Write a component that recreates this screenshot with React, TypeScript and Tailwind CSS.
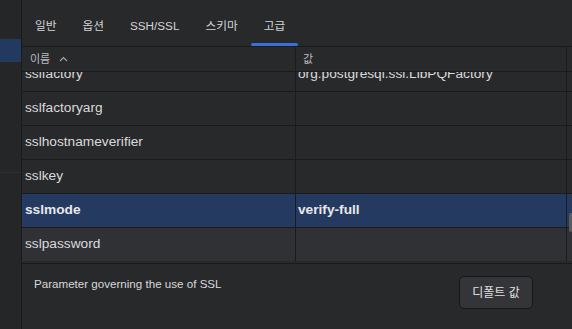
import React from "react";

const rows = [
  { name: "sslfactory", value: "org.postgresql.ssl.LibPQFactory" },
  { name: "sslfactoryarg", value: "" },
  { name: "sslhostnameverifier", value: "" },
  { name: "sslkey", value: "" },
  { name: "sslmode", value: "verify-full", selected: true },
  { name: "sslpassword", value: "", alt: true },
];

const tabs = ["일반", "옵션", "SSH/SSL", "스키마", "고급"];

function Tabs() {
  return (
    <div className="flex h-[47px] border-b border-[#1b1b1d]">
      {tabs.map((t) => (
        <div
          key={t}
          className="relative flex items-center px-[13px] pt-[6px] text-[11.7px] text-[#d4d4d6]"
        >
          {t}
          {t === "고급" && (
            <div className="absolute bottom-0 left-0 right-0 h-[3px] rounded-full bg-[#3a6fd6]" />
          )}
        </div>
      ))}
    </div>
  );
}

function Header() {
  return (
    <div className="flex h-[25px] border-b border-[#1b1b1d] text-[11px] text-[#bdbdc0]">
      <div className="flex w-[274px] items-center gap-[9px] border-r border-[#1b1b1d] pl-[8px]">
        <span>이름</span>
        <svg width="9" height="6" viewBox="0 0 9 6" fill="none">
          <polyline points="1,5 4.5,1.5 8,5" stroke="#a8a8ab" strokeWidth="1.1" />
        </svg>
      </div>
      <div className="flex w-[271px] items-center border-r border-[#1b1b1d] pl-[7px]">값</div>
    </div>
  );
}

function Row({ r }: { r: (typeof rows)[number] }) {
  const bg = r.selected ? "bg-[#253a60]" : r.alt ? "bg-[#303134]" : "";
  const weight = r.selected ? "font-bold text-[#e8e8ea]" : "text-[#dadadc]";
  return (
    <div className={`flex h-[34px] border-b border-[#1b1b1d] text-[13.7px] ${bg} ${weight}`}>
      <div className="flex w-[274px] items-center border-r border-[#1b1b1d] pl-[3px]">{r.name}</div>
      <div className="flex w-[271px] items-center border-r border-[#1b1b1d] pl-[2px]">{r.value}</div>
    </div>
  );
}

export default function App() {
  return (
    <div
      className="relative flex h-[329px] w-[572px] overflow-hidden bg-[#28292b]"
      style={{ fontFamily: '"Liberation Sans", "Noto Sans CJK KR", sans-serif' }}
    >
      <div className="flex w-[22px] flex-col border-r border-[#1b1b1d] bg-[#252628]">
        <div className="mt-[39px] h-[23px] bg-[#233a60]" />
        <div className="mt-[110px] h-px bg-[#303033]" />
      </div>
      <div className="flex flex-1 flex-col">
        <Tabs />
        <Header />
        {/* list is scrolled a little, first row sits partly under the header */}
        <div className="h-[189px] overflow-hidden">
          <div className="mt-[-14px]">
            {rows.map((r) => (
              <Row key={r.name} r={r} />
            ))}
          </div>
        </div>
        <div className="h-[3px] border-b border-[#1b1b1d]" />
        <div className="flex flex-1 items-start justify-between pl-[12px] pr-[39px] pt-[12px]">
          <div className="text-[11.6px] leading-[16px] text-[#d8d8da]">
            Parameter governing the use of SSL
          </div>
          <button className="h-[33px] w-[74px] rounded-[5px] border border-[#161618] bg-[#343538] text-[12px] text-[#e0e0e2]">
            디폴트 값
          </button>
        </div>
      </div>
      <div className="absolute left-[569px] top-[213px] h-[19px] w-[3px] rounded-l-[2px] bg-[#5b5b5e]" />
    </div>
  );
}
